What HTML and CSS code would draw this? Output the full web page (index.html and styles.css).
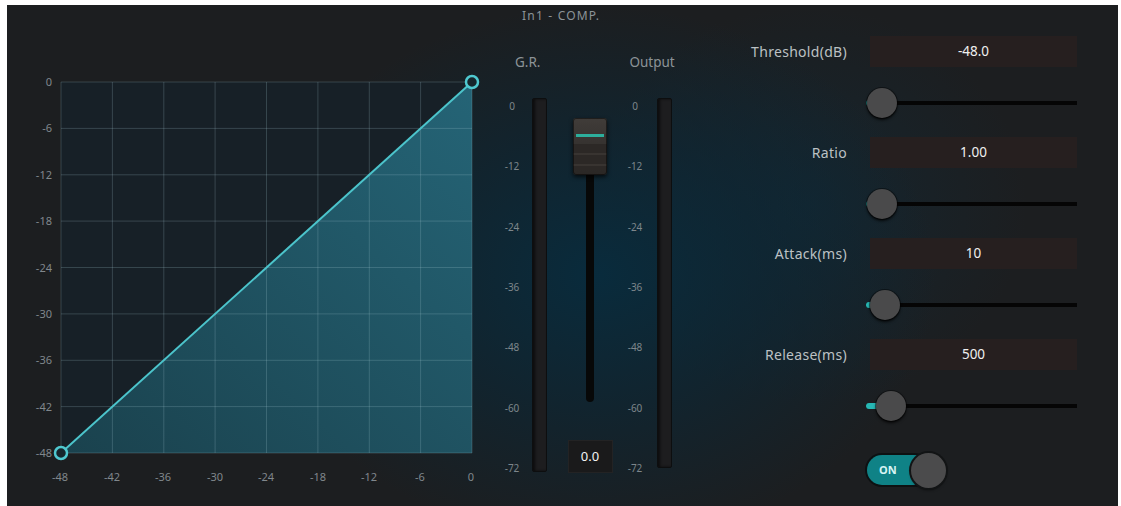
FILE: index.html
```html
<!DOCTYPE html>
<html lang="en">
<head>
    <meta charset="UTF-8">
    <meta name="viewport" content="width=device-width, initial-scale=1.0">
    <title>In1 - COMP.</title>
    <link rel="stylesheet" href="styles.css">
</head>
<body>

    <div class="panel">

        <!-- transfer curve: input level (x) against output level (y) -->
        <svg class="chart" width="483" height="496" viewBox="7 5 483 496">
            <defs>
                <linearGradient id="area" x1="0" y1="1" x2="1" y2="0">
                    <stop offset="0" stop-color="#1b4a57" stop-opacity="0.8"/>
                    <stop offset="1" stop-color="#28758a" stop-opacity="0.8"/>
                </linearGradient>
            </defs>
            <rect x="61" y="82" width="411" height="371" fill="#172027"/>
            <polygon points="61,453 472,82 472,453" fill="url(#area)"/>
            <g class="grid">
                <line x1="61" y1="82" x2="61" y2="453"/>
                <line x1="112.4" y1="82" x2="112.4" y2="453"/>
                <line x1="163.8" y1="82" x2="163.8" y2="453"/>
                <line x1="215.1" y1="82" x2="215.1" y2="453"/>
                <line x1="266.5" y1="82" x2="266.5" y2="453"/>
                <line x1="317.9" y1="82" x2="317.9" y2="453"/>
                <line x1="369.3" y1="82" x2="369.3" y2="453"/>
                <line x1="420.6" y1="82" x2="420.6" y2="453"/>
                <line x1="472" y1="82" x2="472" y2="453"/>
                <line x1="61" y1="82" x2="472" y2="82"/>
                <line x1="61" y1="128.4" x2="472" y2="128.4"/>
                <line x1="61" y1="174.8" x2="472" y2="174.8"/>
                <line x1="61" y1="221.1" x2="472" y2="221.1"/>
                <line x1="61" y1="267.5" x2="472" y2="267.5"/>
                <line x1="61" y1="313.9" x2="472" y2="313.9"/>
                <line x1="61" y1="360.3" x2="472" y2="360.3"/>
                <line x1="61" y1="406.6" x2="472" y2="406.6"/>
                <line x1="61" y1="453" x2="472" y2="453"/>
            </g>
            <g class="y-labels">
                <text x="52" y="86">0</text>
                <text x="52" y="132">-6</text>
                <text x="52" y="179">-12</text>
                <text x="52" y="225">-18</text>
                <text x="52" y="272">-24</text>
                <text x="52" y="318">-30</text>
                <text x="52" y="364">-36</text>
                <text x="52" y="411">-42</text>
                <text x="52" y="457">-48</text>
            </g>
            <g class="x-labels">
                <text x="60" y="481">-48</text>
                <text x="112" y="481">-42</text>
                <text x="163" y="481">-36</text>
                <text x="215" y="481">-30</text>
                <text x="266" y="481">-24</text>
                <text x="318" y="481">-18</text>
                <text x="369" y="481">-12</text>
                <text x="420" y="481">-6</text>
                <text x="471" y="481">0</text>
            </g>
            <line class="curve" x1="61" y1="453" x2="472" y2="82"/>
            <circle class="handle" cx="61" cy="453" r="6"/>
            <circle class="handle" cx="472" cy="82" r="6"/>
        </svg>

        <div class="meters">
            <div class="title">In1 - COMP.</div>
            <div class="meter-heads">
                <span class="head-gr">G.R.</span>
                <span class="head-out">Output</span>
            </div>
            <div class="meter-body">
                <div class="scale scale-gr">
                    <span>0</span><span>-12</span><span>-24</span><span>-36</span><span>-48</span><span>-60</span><span>-72</span>
                </div>
                <div class="bar bar-gr"></div>
                <div class="fader">
                    <div class="fader-track">
                        <div class="fader-knob"></div>
                    </div>
                    <div class="fader-value">0.0</div>
                </div>
                <div class="scale scale-out">
                    <span>0</span><span>-12</span><span>-24</span><span>-36</span><span>-48</span><span>-60</span><span>-72</span>
                </div>
                <div class="bar bar-out"></div>
            </div>
        </div>

        <div class="controls">
            <label class="ctl-label">Threshold(dB)</label>
            <div class="ctl-value">-48.0</div>
            <div class="slider">
                <div class="track">
                    <div class="fill" style="width: 16px"></div>
                    <div class="knob" style="left: 1px"></div>
                </div>
            </div>

            <label class="ctl-label">Ratio</label>
            <div class="ctl-value">1.00</div>
            <div class="slider">
                <div class="track">
                    <div class="fill" style="width: 16px"></div>
                    <div class="knob" style="left: 1px"></div>
                </div>
            </div>

            <label class="ctl-label">Attack(ms)</label>
            <div class="ctl-value">10</div>
            <div class="slider">
                <div class="track">
                    <div class="fill" style="width: 19px"></div>
                    <div class="knob" style="left: 4px"></div>
                </div>
            </div>

            <label class="ctl-label">Release(ms)</label>
            <div class="ctl-value">500</div>
            <div class="slider">
                <div class="track">
                    <div class="fill" style="width: 25px"></div>
                    <div class="knob" style="left: 10px"></div>
                </div>
            </div>

            <div class="toggle">
                <span class="toggle-text">ON</span>
                <span class="toggle-knob"></span>
            </div>
        </div>

    </div>

</body>
</html>
```

FILE: styles.css
```css
body {
    margin: 0;
    background-color: #ffffff;
    font-family: "Noto Sans", "Open Sans", sans-serif;
}

.panel {
    display: flex;
    width: 1111px;
    height: 501px;
    margin: 5px 0 0 7px;
    background:
        radial-gradient(ellipse 340px 270px at 590px 270px, rgba(8, 44, 62, 0.95) 0%, rgba(10, 40, 56, 0.6) 50%, rgba(28, 30, 32, 0) 100%),
        radial-gradient(ellipse 220px 200px at 800px 200px, rgba(14, 44, 60, 0.5) 0%, rgba(28, 30, 32, 0) 100%),
        #1c1e20;
}

/* chart */
.chart {
    flex: none;
    display: block;
}

.grid line {
    stroke: rgba(170, 205, 215, 0.22);
    stroke-width: 1;
}

.y-labels text,
.x-labels text {
    fill: #80878c;
    font-size: 11px;
    font-family: "Noto Sans", sans-serif;
}

.y-labels text {
    text-anchor: end;
}

.x-labels text {
    text-anchor: middle;
}

.curve {
    stroke: #4cc4cb;
    stroke-width: 2;
}

.handle {
    fill: #16262c;
    stroke: #4fc8cf;
    stroke-width: 2.5;
}

/* meters + fader */
.meters {
    width: 207px;
    flex: none;
    padding-top: 3px;
}

.title {
    margin-left: 32px;
    font-size: 12px;
    letter-spacing: 1.2px;
    line-height: 16px;
    color: #8c9397;
}

.meter-heads {
    display: flex;
    margin-top: 31px;
    font-size: 13.5px;
    line-height: 14px;
    color: #8c9397;
}

.head-gr {
    margin-left: 25px;
}

.head-out {
    margin-left: 89px;
}

.meter-body {
    display: flex;
    align-items: flex-start;
    margin-top: 29px;
}

.scale {
    width: 22px;
    height: 376px;
    margin-top: 1px;
    display: flex;
    flex-direction: column;
    justify-content: space-between;
    align-items: center;
    font-size: 10px;
    line-height: 14px;
    color: #7d868b;
}

.scale-gr {
    margin-left: 11px;
}

.scale-out {
    margin-left: 6px;
}

.bar {
    width: 13px;
    background-color: #1d1d1f;
    border: 1px solid #0d0e0f;
    border-radius: 2px;
    box-shadow: inset 2px 0 3px rgba(0, 0, 0, 0.6);
}

.bar-gr {
    height: 372px;
    margin-left: 9px;
}

.bar-out {
    height: 368px;
    margin-left: 11px;
}

.fader {
    width: 56px;
    margin-left: 15px;
    margin-top: 20px;
    display: flex;
    flex-direction: column;
    align-items: center;
}

.fader-track {
    position: relative;
    width: 8px;
    height: 284px;
    background-color: #070808;
    border-radius: 0 0 4px 4px;
}

.fader-knob {
    position: absolute;
    top: 0;
    left: -13px;
    width: 34px;
    height: 57px;
    border-radius: 3px;
    background:
        linear-gradient(#2dae9c, #2dae9c) 3px 16px / 28px 3px no-repeat,
        repeating-linear-gradient(#2c2826 0, #2c2826 9px, #45403c 10px, #2c2826 11px) 0 26px / 100% 26px no-repeat,
        linear-gradient(#403c39, #2a2725);
    box-shadow: 0 2px 4px rgba(0, 0, 0, 0.7), inset 0 0 0 1px rgba(0, 0, 0, 0.5);
}

.fader-value {
    width: 45px;
    height: 33px;
    margin-top: 38px;
    background-color: #1a1a1b;
    box-shadow: inset 0 0 0 1px #232324;
    color: #f2f2f2;
    font-size: 13px;
    line-height: 33px;
    text-align: center;
}

/* parameter controls */
.controls {
    flex: 1;
    display: grid;
    grid-template-columns: 150px 207px;
    grid-template-rows: repeat(4, 31px 70px) 47px;
    column-gap: 23px;
    padding-top: 31px;
}

.ctl-label {
    align-self: center;
    text-align: right;
    font-size: 14px;
    letter-spacing: 0.3px;
    color: #bcc1c4;
}

.ctl-value {
    background-color: #261f1f;
    color: #f0f0f0;
    font-size: 13.5px;
    line-height: 31px;
    text-align: center;
}

.slider {
    grid-column: 2;
    display: flex;
    align-items: center;
    margin-left: -4px;
    margin-top: 2px;
}

.track {
    position: relative;
    width: 211px;
    height: 4px;
    background-color: #050505;
}

.fill {
    position: absolute;
    left: 0;
    top: -1px;
    height: 6px;
    border-radius: 3px;
    background-color: #27b7b4;
}

.knob {
    position: absolute;
    top: -13px;
    width: 30px;
    height: 30px;
    border-radius: 50%;
    background-color: #4a4a4b;
    box-shadow: 0 2px 3px rgba(0, 0, 0, 0.8), 0 0 0 1px rgba(0, 0, 0, 0.4);
}

.toggle {
    grid-column: 2;
    margin-top: 13px;
    margin-left: -3px;
    position: relative;
    width: 79px;
    height: 34px;
}

.toggle-text {
    position: absolute;
    left: 0;
    top: 2px;
    width: 62px;
    height: 30px;
    box-sizing: border-box;
    padding-left: 12px;
    border-radius: 15px;
    background-color: #0f8286;
    box-shadow: 0 0 0 2px #0d1112;
    color: #d8f4f4;
    font-size: 11px;
    font-weight: bold;
    line-height: 30px;
}

.toggle-knob {
    position: absolute;
    right: 0;
    top: 0;
    width: 35px;
    height: 35px;
    border-radius: 50%;
    background-color: #4b4b4c;
    box-shadow: 0 0 0 2px #121415, 0 2px 3px rgba(0, 0, 0, 0.6);
}
```
